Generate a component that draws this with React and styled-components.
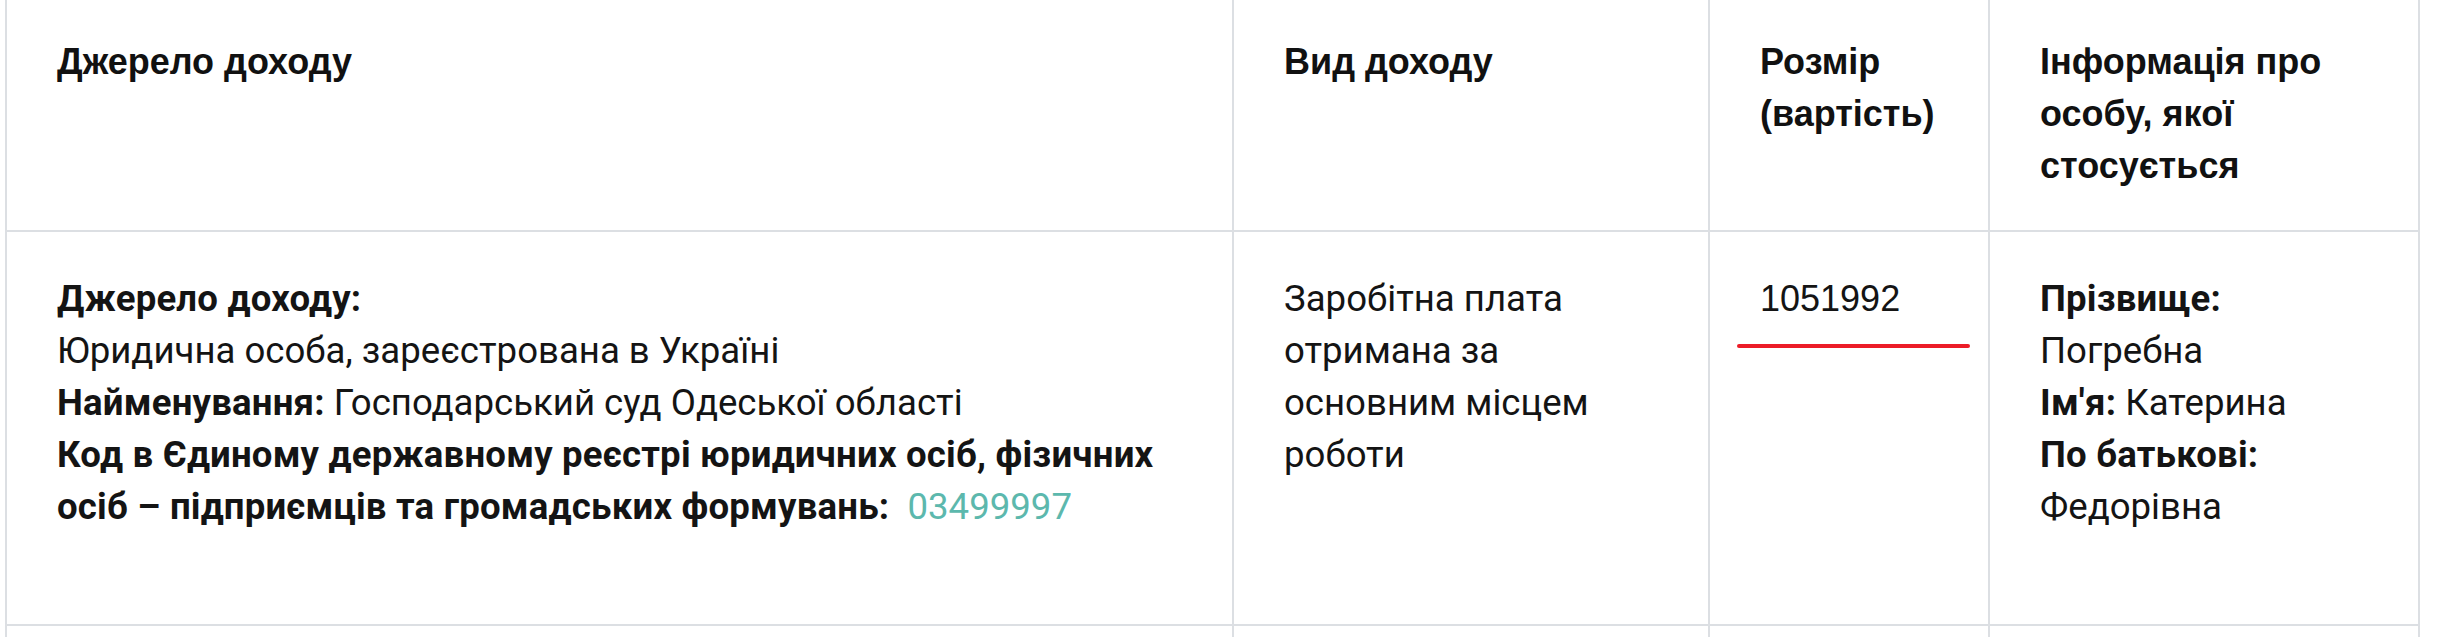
import styled, { createGlobalStyle } from 'styled-components';

const GlobalStyle = createGlobalStyle`
  html, body {
    margin: 0;
    padding: 0;
    background: #fff;
  }
  body {
    font-family: 'Roboto', 'Noto Sans', sans-serif;
    color: #141414;
  }
`;

const Table = styled.table`
  margin-left: 5px;
  width: 2415px;
  table-layout: fixed;
  border-collapse: separate;
  border-spacing: 0;
  border-left: 2px solid #dcdfe3;
`;

const HeadCell = styled.th`
  box-sizing: border-box;
  height: 232px;
  padding: 36px 50px 38px;
  border-right: 2px solid #dcdfe3;
  border-bottom: 2px solid #dcdfe3;
  vertical-align: top;
  text-align: left;
  font-family: 'Liberation Sans', Arial, sans-serif;
  font-size: 36px;
  font-weight: 700;
  line-height: 52px;
  color: #111;
`;

const Cell = styled.td`
  box-sizing: border-box;
  height: ${p => p.$h || 394}px;
  padding: 41px 50px 91px;
  border-right: 2px solid #dcdfe3;
  border-bottom: 2px solid #dcdfe3;
  vertical-align: top;
  font-size: 36.6px;
  line-height: 52px;
  color: #141414;
`;

const Line = styled.div`
  margin: 0;
`;

const Label = styled.b`
  font-weight: 700;
  letter-spacing: 0.2px;
`;

const Code = styled.a`
  color: #5cb8ad;
  text-decoration: none;
  font-weight: 400;
`;

const Amount = styled.div`
  font-family: 'Liberation Sans', Arial, sans-serif;
  font-size: 36px;
  line-height: 52px;
`;

const RedMark = styled.div`
  width: 233px;
  height: 4px;
  margin: 19px 0 0 -23px;
  border-radius: 2px;
  background: #ec1c27;
`;

export default function App() {
  return (
    <>
      <GlobalStyle />
      <Table>
        <colgroup>
          <col style={{ width: 1227 }} />
          <col style={{ width: 476 }} />
          <col style={{ width: 280 }} />
          <col style={{ width: 430 }} />
        </colgroup>
        <thead>
          <tr>
            <HeadCell>Джерело доходу</HeadCell>
            <HeadCell>Вид доходу</HeadCell>
            <HeadCell>Розмір (вартість)</HeadCell>
            <HeadCell>Інформація про особу, якої стосується</HeadCell>
          </tr>
        </thead>
        <tbody>
          <tr>
            <Cell>
              <Line><Label>Джерело доходу:</Label></Line>
              <Line>Юридична особа, зареєстрована в Україні</Line>
              <Line><Label>Найменування:</Label> Господарський суд Одеської області</Line>
              <Line>
                <Label>Код в Єдиному державному реєстрі юридичних осіб, фізичних осіб – підприємців та громадських формувань:</Label>
                {'\u00a0 '}
                <Code href="#">03499997</Code>
              </Line>
            </Cell>
            <Cell>Заробітна плата отримана за основним місцем роботи</Cell>
            <Cell>
              <Amount>1051992</Amount>
              <RedMark />
            </Cell>
            <Cell>
              <Line><Label>Прізвище:</Label> Погребна</Line>
              <Line><Label>Ім'я:</Label> Катерина</Line>
              <Line><Label>По батькові:</Label> Федорівна</Line>
            </Cell>
          </tr>
          <tr>
            <Cell $h={120} />
            <Cell $h={120} />
            <Cell $h={120} />
            <Cell $h={120} />
          </tr>
        </tbody>
      </Table>
    </>
  );
}
